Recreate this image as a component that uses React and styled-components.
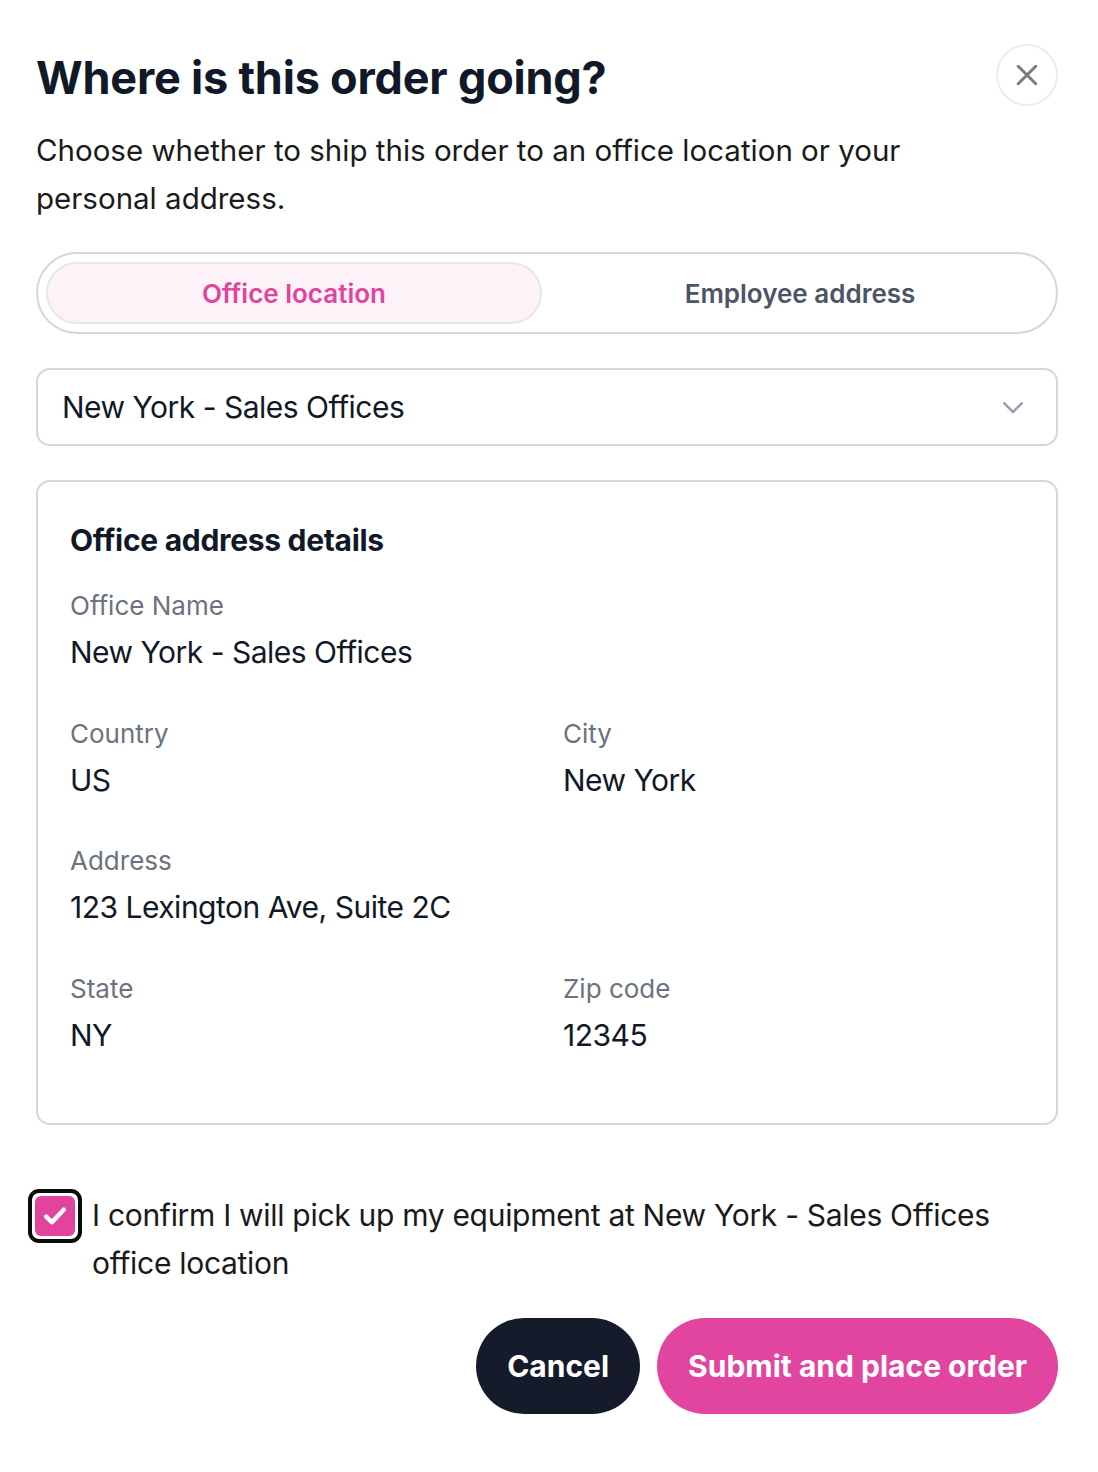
import React, { useState } from 'react'
import styled, { createGlobalStyle } from 'styled-components'

const Global = createGlobalStyle`
	body {
		margin: 0;
		background: #ffffff;
		font-family: Inter, "Noto Sans", sans-serif;
		color: #111827;
	}
	* { box-sizing: border-box; }
`

const Modal = styled.div`
	width: 1098px;
	padding: 44px 40px 60px 36px;
	display: flex;
	flex-direction: column;
`

const Header = styled.div`
	display: flex;
	justify-content: space-between;
	align-items: flex-start;
`

const Title = styled.h1`
	margin: 6px 0 0;
	font-size: 45px;
	line-height: 56px;
	font-weight: 700;
	letter-spacing: -0.2px;
	color: #111827;
`

const CloseButton = styled.button`
	width: 62px;
	height: 62px;
	border-radius: 50%;
	border: 2px solid #ececee;
	background: #fff;
	display: flex;
	align-items: center;
	justify-content: center;
	padding: 0;
	cursor: pointer;
`

const Intro = styled.p`
	margin: 20px 0 0;
	font-size: 29.5px;
	line-height: 48px;
	color: #1a1a1a;
	max-width: 900px;
`

const Toggle = styled.div`
	margin-top: 30px;
	height: 82px;
	border: 2px solid #d4d7dd;
	border-radius: 41px;
	padding: 8px;
	display: grid;
	grid-template-columns: 1fr 1fr;
	gap: 10px;
`

const ToggleOption = styled.button`
	border-radius: 31px;
	border: 2px solid ${p => (p.$active ? '#e5e7eb' : 'transparent')};
	background: ${p => (p.$active ? '#fdf2f8' : 'transparent')};
	color: ${p => (p.$active ? '#e2449d' : '#4b5563')};
	font-family: inherit;
	font-size: 26px;
	font-weight: 600;
	cursor: pointer;
`

const Select = styled.div`
	margin-top: 34px;
	height: 78px;
	border: 2px solid #d4d7dd;
	border-radius: 14px;
	padding: 0 28px 0 24px;
	display: flex;
	align-items: center;
	justify-content: space-between;
	font-size: 30px;
	letter-spacing: -0.5px;
	color: #111827;
`

const Card = styled.div`
	margin-top: 34px;
	border: 2px solid #d4d7dd;
	border-radius: 14px;
	padding: 38px 32px 68px;
	display: flex;
	flex-direction: column;
`

const CardTitle = styled.h2`
	margin: 0 0 26px;
	font-size: 30px;
	line-height: 40px;
	font-weight: 700;
	letter-spacing: -0.3px;
	color: #111827;
`

const Grid = styled.div`
	display: grid;
	grid-template-columns: 1fr 1fr;
	column-gap: 32px;
	row-gap: 41.5px;
`

const Field = styled.div`
	grid-column: ${p => (p.$full ? '1 / -1' : 'auto')};
	display: flex;
	flex-direction: column;
	gap: 6px;
`

const Label = styled.span`
	font-size: 26px;
	line-height: 40px;
	color: #6b7280;
`

const Value = styled.span`
	font-size: 30px;
	line-height: 40px;
	letter-spacing: -0.5px;
	color: #111827;
`

const Confirm = styled.label`
	margin-top: 64px;
	margin-left: -8px;
	display: flex;
	align-items: flex-start;
	gap: 10px;
	cursor: pointer;
`

const CheckRing = styled.span`
	flex: none;
	width: 54px;
	height: 54px;
	border: 4px solid #0b0b0b;
	border-radius: 11px;
	padding: 3px;
	display: flex;
`

const CheckBox = styled.span`
	flex: 1;
	border-radius: 6px;
	background: ${p => (p.$checked ? '#e2449d' : '#fff')};
	display: flex;
	align-items: center;
	justify-content: center;
`

const ConfirmText = styled.span`
	font-size: 30px;
	line-height: 48px;
	letter-spacing: -0.3px;
	color: #1a1a1a;
	padding-top: 2px;
`

const Actions = styled.div`
	margin-top: 31px;
	display: flex;
	justify-content: flex-end;
	gap: 17px;
`

const Button = styled.button`
	height: 96px;
	padding: 0 31px;
	border: none;
	border-radius: 48px;
	background: ${p => (p.$primary ? '#e2459f' : '#151b2a')};
	color: #fff;
	font-family: inherit;
	font-size: 30px;
	font-weight: 700;
	cursor: pointer;
`

const details = [
	{ label: 'Office Name', value: 'New York - Sales Offices', full: true },
	{ label: 'Country', value: 'US' },
	{ label: 'City', value: 'New York' },
	{ label: 'Address', value: '123 Lexington Ave, Suite 2C', full: true },
	{ label: 'State', value: 'NY' },
	{ label: 'Zip code', value: '12345' },
]

const App = () => {
	const [tab, setTab] = useState('office')
	const [checked, setChecked] = useState(true)

	return (
		<>
			<Global />
			<Modal>
				<Header>
					<Title>Where is this order going?</Title>
					<CloseButton aria-label="Close">
						<svg width="30" height="30" viewBox="0 0 24 24" fill="none" stroke="#7a7a7a" strokeWidth="2.4" strokeLinecap="round">
							<path d="M5 5l14 14M19 5L5 19" />
						</svg>
					</CloseButton>
				</Header>
				<Intro>Choose whether to ship this order to an office location or your personal address.</Intro>

				<Toggle>
					<ToggleOption $active={tab === 'office'} onClick={() => setTab('office')}>Office location</ToggleOption>
					<ToggleOption $active={tab === 'employee'} onClick={() => setTab('employee')}>Employee address</ToggleOption>
				</Toggle>

				<Select>
					<span>New York - Sales Offices</span>
					<svg width="30" height="30" viewBox="0 0 24 24" fill="none" stroke="#9ca3af" strokeWidth="2" strokeLinecap="round" strokeLinejoin="round">
						<path d="M5 9l7 7 7-7" />
					</svg>
				</Select>

				<Card>
					<CardTitle>Office address details</CardTitle>
					<Grid>
						{details.map(d => (
							<Field key={d.label} $full={d.full}>
								<Label>{d.label}</Label>
								<Value>{d.value}</Value>
							</Field>
						))}
					</Grid>
				</Card>

				<Confirm onClick={() => setChecked(!checked)}>
					<CheckRing>
						<CheckBox $checked={checked}>
							{checked && (
								<svg width="30" height="30" viewBox="0 0 24 24" fill="none" stroke="#fff" strokeWidth="3.6" strokeLinecap="round" strokeLinejoin="round">
									<path d="M5 12.5l4.5 4.5L19 7" />
								</svg>
							)}
						</CheckBox>
					</CheckRing>
					<ConfirmText>I confirm I will pick up my equipment at New York - Sales Offices office location</ConfirmText>
				</Confirm>

				<Actions>
					<Button>Cancel</Button>
					<Button $primary>Submit and place order</Button>
				</Actions>
			</Modal>
		</>
	)
}

export default App
